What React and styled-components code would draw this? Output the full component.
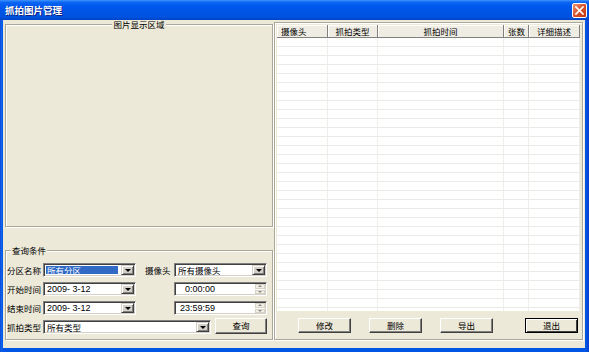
import React from 'react';
import styled, { createGlobalStyle } from 'styled-components';

const GlobalStyle = createGlobalStyle`
  html, body { margin: 0; padding: 0; background: #fff; }
  body { font-family: "Liberation Sans", "Noto Sans CJK SC", sans-serif; font-size: 8.5px; color: #000; }
  * { box-sizing: border-box; }
`;

const Window = styled.div`
  width: 589px;
  height: 352px;
  display: flex;
  flex-direction: column;
  background: linear-gradient(to right, #0A3FCC 0, #1466EE 1px, #0055E5 3px, #0055E5 calc(100% - 3px), #0A3FCC 100%);
  overflow: hidden;
`;

const TitleBar = styled.div`
  height: 20px;
  flex: none;
  display: flex;
  align-items: center;
  justify-content: space-between;
  padding: 0 2px 0 5px;
  background: linear-gradient(to bottom, #3E93FF 0%, #0A65F2 12%, #0058EE 30%, #0055E5 60%, #0052E0 85%, #0043C4 100%);
`;

const Title = styled.span`
  color: #fff;
  font-family: "Noto Sans CJK SC", sans-serif;
  font-weight: 700;
  font-size: 9.5px;
  line-height: 12px;
  text-shadow: 1px 1px 0 #0A1F80;
`;

const CloseBtn = styled.div`
  width: 15px;
  height: 15px;
  border: 1px solid #fff;
  border-radius: 2px;
  background: linear-gradient(135deg, #EC9A78 0%, #DA5531 45%, #C2380F 100%);
  display: flex;
  align-items: center;
  justify-content: center;
`;

const Body = styled.div`
  flex: 1;
  min-height: 0;
  margin: 0 4px 4px 3px;
  background: #ECE9D8;
  display: flex;
  gap: 1px;
  padding: 0 2px 8px 2px;
`;

const LeftColumn = styled.div`
  width: 268px;
  flex: none;
  display: flex;
  flex-direction: column;
`;

const Group = styled.fieldset`
  margin: ${p => p.$mt || 0}px 0 0 0;
  padding: 0 1px;
  height: ${p => p.$h}px;
  min-width: 0;
  border: 1px solid #ACA899;
  box-shadow: inset 1px 1px 0 #fff, 1px 1px 0 #fff;
`;

const Legend = styled.legend`
  padding: 0 1px;
  margin: ${p => (p.$center ? '0 auto' : '0 0 0 4px')};
  font-family: "Noto Sans CJK SC", sans-serif;
  font-size: 8.5px;
  line-height: 9px;
  background: #ECE9D8;
`;

const QueryRows = styled.div`
  display: flex;
  flex-direction: column;
  gap: 5px;
  padding-top: 8px;
`;

const Row = styled.div`
  display: flex;
  align-items: center;
  height: 14px;
`;

const Label = styled.span`
  width: ${p => p.$w}px;
  flex: none;
  padding-left: ${p => p.$pl || 0}px;
  font-family: "Noto Sans CJK SC", sans-serif;
  font-size: 8.5px;
  white-space: nowrap;
`;

const Sunken = styled.div`
  width: ${p => p.$w}px;
  height: 14px;
  flex: none;
  display: flex;
  align-items: stretch;
  background: #fff;
  border: 1px solid;
  border-color: #808080 #fff #fff #808080;
  box-shadow: inset 1px 1px 0 #404040, inset -1px -1px 0 #D4D0C8;
  padding: 2px 2px 2px 2px;
`;

const FieldText = styled.span`
  flex: 1;
  display: flex;
  align-items: center;
  padding-left: 1px;
  margin-right: 3px;
  white-space: pre;
  font-size: ${p => (p.$latin ? 9 : 8.5)}px;
  background: ${p => (p.$selected ? '#316AC5' : 'transparent')};
  color: ${p => (p.$selected ? '#fff' : '#000')};
`;

const DropBtn = styled.div`
  width: 13px;
  flex: none;
  margin: -1px -1px -1px 0;
  background: #D4D0C8;
  border: 1px solid;
  border-color: #D4D0C8 #404040 #404040 #D4D0C8;
  box-shadow: inset 1px 1px 0 #fff, inset -1px -1px 0 #808080;
  display: flex;
  align-items: center;
  justify-content: center;
`;

const Arrow = styled.span`
  width: 0;
  height: 0;
  border-left: ${p => p.$s || 3}px solid transparent;
  border-right: ${p => p.$s || 3}px solid transparent;
  ${p => (p.$up ? 'border-bottom' : 'border-top')}: ${p => p.$s || 3}px solid ${p => p.$c || '#000'};
`;

const TimeText = styled.span`
  width: 38px;
  flex: none;
  display: flex;
  align-items: center;
  justify-content: flex-end;
  font-size: 9px;
`;

const Spin = styled.div`
  width: 10px;
  flex: none;
  margin: -1px -1px -1px auto;
  display: flex;
  flex-direction: column;
  gap: 1px;
`;

const SpinBtn = styled.div`
  flex: 1;
  background: #F1EFE6;
  border: 1px solid #D6D3C6;
  display: flex;
  align-items: center;
  justify-content: center;
`;

const Btn = styled.button`
  width: ${p => p.$w || 53}px;
  height: ${p => p.$h || 15}px;
  flex: none;
  margin: ${p => p.$m || 0};
  padding: 0;
  font-family: "Noto Sans CJK SC", sans-serif;
  font-size: 8.5px;
  line-height: 1;
  color: #000;
  background: #ECE9D8;
  border: 1px solid;
  border-color: ${p => (p.$default ? '#000' : '#fff #404040 #404040 #fff')};
  box-shadow: ${p =>
    p.$default
      ? 'inset 1px 1px 0 #fff, inset -1px -1px 0 #404040'
      : 'inset -1px -1px 0 #808080'};
`;

const RightFrame = styled.div`
  width: 309px;
  height: 318px;
  flex: none;
  margin-top: 2px;
  border: 1px solid #ACA899;
  box-shadow: inset 1px 1px 0 #fff, 1px 1px 0 #fff;
  padding: 2px 2px 0 2px;
  display: flex;
  flex-direction: column;
`;

const List = styled.div`
  height: 286px;
  flex: none;
  background: #fff;
  display: flex;
  flex-direction: column;
  overflow: hidden;
`;

const HeaderRow = styled.div`
  display: flex;
  height: 13px;
  flex: none;
  background: #EFEDE3;
  border-bottom: 1px solid #808080;
`;

const HeaderCell = styled.div`
  width: ${p => p.$w}px;
  flex: none;
  border-right: 1px solid #808080;
  box-shadow: inset 1px 1px 0 #fff;
  font-family: "Noto Sans CJK SC", sans-serif;
  font-size: 8.5px;
  line-height: 12px;
  padding: 0 4px;
  text-align: ${p => p.$align};
  white-space: nowrap;
`;

const GridRow = styled.div`
  display: flex;
  height: 9px;
  flex: none;
  border-bottom: 1px solid #EAEAE6;
`;

const GridCell = styled.div`
  width: ${p => p.$w}px;
  flex: none;
  border-right: 1px solid #EEEEEA;
`;

const ButtonBar = styled.div`
  display: flex;
  gap: 18px;
  padding: 7px 2px 0 21px;
`;

const cols = [
  { label: '摄像头', w: 51, align: 'left' },
  { label: '抓拍类型', w: 50, align: 'center' },
  { label: '抓拍时间', w: 126, align: 'center' },
  { label: '张数', w: 25, align: 'center' },
  { label: '详细描述', w: 51, align: 'center' },
];

const Combo = ({ w, text, selected, latin }) => (
  <Sunken $w={w}>
    <FieldText $selected={selected} $latin={latin}>{text}</FieldText>
    <DropBtn>
      <Arrow $s={3} />
    </DropBtn>
  </Sunken>
);

const TimeBox = ({ text }) => (
  <Sunken $w={93}>
    <TimeText>{text}</TimeText>
    <Spin>
      <SpinBtn><Arrow $up $s={2} $c="#8A8A8A" /></SpinBtn>
      <SpinBtn><Arrow $s={2} $c="#8A8A8A" /></SpinBtn>
    </Spin>
  </Sunken>
);

export default function App() {
  const rows = Array.from({ length: 31 });
  return (
    <>
      <GlobalStyle />
      <Window>
        <TitleBar>
          <Title>抓拍图片管理</Title>
          <CloseBtn>
            <svg width="9" height="9" viewBox="0 0 9 9">
              <path d="M1 1 L8 8 M8 1 L1 8" stroke="#fff" strokeWidth="1.7" strokeLinecap="square" />
            </svg>
          </CloseBtn>
        </TitleBar>
        <Body>
          <LeftColumn>
            <Group $h={207}>
              <Legend $center align="center">图片显示区域</Legend>
            </Group>
            <Group $h={94} $mt={19}>
              <Legend>查询条件</Legend>
              <QueryRows>
                <Row>
                  <Label $w={36}>分区名称</Label>
                  <Combo w={93} text="所有分区" selected />
                  <Label $w={38} $pl={9}>摄像头</Label>
                  <Combo w={93} text="所有摄像头" />
                </Row>
                <Row>
                  <Label $w={36}>开始时间</Label>
                  <Combo w={93} text="2009- 3-12" latin />
                  <Label $w={38} />
                  <TimeBox text="0:00:00" />
                </Row>
                <Row>
                  <Label $w={36}>结束时间</Label>
                  <Combo w={93} text="2009- 3-12" latin />
                  <Label $w={38} />
                  <TimeBox text="23:59:59" />
                </Row>
                <Row>
                  <Label $w={36}>抓拍类型</Label>
                  <Combo w={168} text="所有类型" />
                  <Btn $w={52} $h={16} $m="-3px 0 0 4px">查询</Btn>
                </Row>
              </QueryRows>
            </Group>
          </LeftColumn>
          <RightFrame>
            <List>
              <HeaderRow>
                {cols.map(c => (
                  <HeaderCell key={c.label} $w={c.w} $align={c.align}>{c.label}</HeaderCell>
                ))}
              </HeaderRow>
              {rows.map((_, i) => (
                <GridRow key={i}>
                  {cols.map(c => <GridCell key={c.label} $w={c.w} />)}
                </GridRow>
              ))}
            </List>
            <ButtonBar>
              <Btn>修改</Btn>
              <Btn>删除</Btn>
              <Btn>导出</Btn>
              <Btn $default $m="0 0 0 auto">退出</Btn>
            </ButtonBar>
          </RightFrame>
        </Body>
      </Window>
    </>
  );
}
